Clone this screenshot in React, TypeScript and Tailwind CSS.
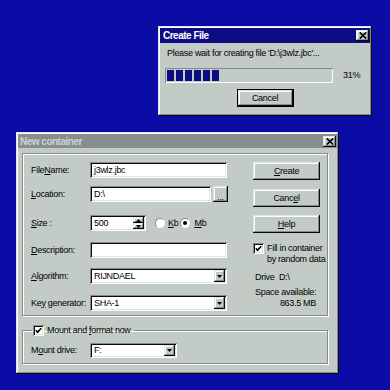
import type { ReactNode } from 'react';

const raised =
  'bg-[#c3cbc7] shadow-[inset_-1px_-1px_#0a0a0a,inset_1px_1px_#dde5e1,inset_-2px_-2px_#858d8a,inset_2px_2px_#ffffff]';
const sunken =
  'bg-white shadow-[inset_1px_1px_#858d8a,inset_-1px_-1px_#ffffff,inset_2px_2px_#0a0a0a,inset_-2px_-2px_#dde5e1]';
const etched = 'border border-[#858d8a] shadow-[inset_1px_1px_#ffffff,1px_1px_#ffffff]';

function CloseButton() {
  return (
    <div className={`flex h-[11px] w-[13px] items-center justify-center ${raised}`}>
      <svg width="8" height="7" viewBox="0 0 8 7" className="block">
        <path d="M0.8 0.5L7.2 6.5M7.2 0.5L0.8 6.5" stroke="#000" strokeWidth="1.7" />
      </svg>
    </div>
  );
}

function Field({ children, className = '' }: { children?: ReactNode; className?: string }) {
  return (
    <div className={`flex h-[16px] items-center pl-[4px] ${sunken} ${className}`}>{children}</div>
  );
}

function Combo({ value, className = '' }: { value: string; className?: string }) {
  return (
    <div className={`flex h-[16px] items-center p-[2px] ${sunken} ${className}`}>
      <span className="flex-1 pl-[2px]">{value}</span>
      <div className={`flex h-full w-[11px] items-center justify-center ${raised}`}>
        <svg width="5" height="3" viewBox="0 0 5 3" className="block">
          <path d="M0 0H5L2.5 3Z" fill="#000" />
        </svg>
      </div>
    </div>
  );
}

function Checkbox() {
  return (
    <div className={`flex h-[11px] w-[11px] shrink-0 items-center justify-center ${sunken}`}>
      <svg width="7" height="7" viewBox="0 0 7 7" className="block">
        <path d="M0.8 3.2L2.6 5.2L6.2 1.2" stroke="#000" strokeWidth="1.6" fill="none" />
      </svg>
    </div>
  );
}

function Radio({ checked }: { checked?: boolean }) {
  return (
    <div className="flex h-[10px] w-[10px] shrink-0 items-center justify-center rounded-full border border-b-white border-l-[#858d8a] border-r-white border-t-[#858d8a] bg-white">
      {checked && <div className="h-[4px] w-[4px] rounded-full bg-black" />}
    </div>
  );
}

function Button({ children, className = '' }: { children: ReactNode; className?: string }) {
  return (
    <div className={`flex h-[18px] w-[67px] items-center justify-center ${raised} ${className}`}>
      {children}
    </div>
  );
}

function CreateFileWindow() {
  return (
    <div className={`absolute left-[158px] top-[26px] flex h-[90px] w-[214px] flex-col p-[2px] ${raised}`}>
      <div className="flex h-[15px] items-center justify-between bg-[#0c0c84] pl-[3px] pr-[1px]">
        <span className="text-[10px] font-bold tracking-[-0.5px] text-white">Create File</span>
        <CloseButton />
      </div>
      <p className="ml-[7px] mt-[5px]">{"Please wait for creating file 'D:\\j3wlz.jbc'..."}</p>
      <div className="ml-[5px] mt-[9px] flex items-center">
        <div className="flex h-[15px] w-[168px] items-center gap-[2px] pl-[2px] shadow-[inset_1px_1px_#858d8a,inset_-1px_-1px_#ffffff]">
          {[0, 1, 2, 3, 4, 5].map((i) => (
            <div key={i} className="h-[11px] w-[7px] bg-[#0c0c84]" />
          ))}
        </div>
        <span className="ml-[10px]">31%</span>
      </div>
      <div className="mt-[6px] flex justify-center">
        <div className="border border-black">
          <div className={`flex h-[16px] w-[55px] items-center justify-center ${raised}`}>Cancel</div>
        </div>
      </div>
    </div>
  );
}

function NewContainerWindow() {
  return (
    <div className={`absolute left-[16px] top-[132px] flex h-[242px] w-[323px] flex-col p-[2px] ${raised}`}>
      <div className="flex h-[14px] items-center justify-between bg-[#868e8e] pl-[2px] pr-[1px]">
        <span className="text-[10px] font-bold tracking-[-0.5px] text-[#ccd4d0]">New container</span>
        <CloseButton />
      </div>

      {/* Main group */}
      <div className={`ml-[4px] mt-[5px] flex h-[163px] w-[306px] pl-[8px] ${etched}`}>
        <div className="flex w-[197px] flex-col pt-[8px]">
          <div className="flex h-[16px] items-center">
            <span className="w-[59px]">
              File<u>N</u>ame:
            </span>
            <Field className="w-[137px]">j3wlz.jbc</Field>
          </div>
          <div className="mt-[8px] flex h-[16px] items-center">
            <span className="w-[59px]">
              <u>L</u>ocation:
            </span>
            <Field className="w-[121px]">D:\</Field>
            <div className={`ml-[2px] flex h-[16px] w-[15px] items-end justify-center pb-[2px] leading-[6px] ${raised}`}>
              ...
            </div>
          </div>
          <div className="mt-[13px] flex h-[16px] items-center">
            <span className="w-[59px]">
              <u>S</u>ize :
            </span>
            <div className={`flex h-[16px] w-[56px] items-center p-[2px] ${sunken}`}>
              <span className="flex-1 pl-[2px]">500</span>
              <div className="flex h-full w-[11px] flex-col">
                <div className={`flex flex-1 items-center justify-center ${raised}`}>
                  <svg width="5" height="3" viewBox="0 0 5 3" className="block">
                    <path d="M0 3H5L2.5 0Z" fill="#000" />
                  </svg>
                </div>
                <div className={`flex flex-1 items-center justify-center ${raised}`}>
                  <svg width="5" height="3" viewBox="0 0 5 3" className="block">
                    <path d="M0 0H5L2.5 3Z" fill="#000" />
                  </svg>
                </div>
              </div>
            </div>
            <div className="ml-[9px] flex items-center">
              <Radio />
              <span className="ml-[3px]">
                <u>K</u>b
              </span>
            </div>
            <div className="ml-[2px] flex items-center">
              <Radio checked />
              <span className="ml-[4px]">
                <u>M</u>b
              </span>
            </div>
          </div>
          <div className="mt-[11px] flex h-[16px] items-center">
            <span className="w-[59px]">
              <u>D</u>escription:
            </span>
            <Field className="w-[137px]" />
          </div>
          <div className="mt-[10px] flex h-[16px] items-center">
            <span className="w-[59px]">
              <u>A</u>lgorithm:
            </span>
            <Combo value="RIJNDAEL" className="w-[137px]" />
          </div>
          <div className="mt-[11px] flex h-[16px] items-center">
            <span className="w-[59px]">
              Ke<u>y</u> generator:
            </span>
            <Combo value="SHA-1" className="w-[137px]" />
          </div>
        </div>

        <div className="ml-[25px] flex w-[67px] flex-col pt-[8px]">
          <Button>
            <span>
              <u>C</u>reate
            </span>
          </Button>
          <Button className="mt-[9px]">
            <span>
              Canc<u>e</u>l
            </span>
          </Button>
          <Button className="mt-[8px]">
            <span>
              <u>H</u>elp
            </span>
          </Button>
          <div className="mt-[10px] flex items-start">
            <Checkbox />
            <span className="ml-[3px] whitespace-nowrap">
              Fill in container
              <br />
              by random data
            </span>
          </div>
          <p className="ml-[2px] mt-[7px] whitespace-pre">{'Drive  D:\\'}</p>
          <p className="ml-[2px] mt-[4px] whitespace-nowrap">Space available:</p>
          <p className="pr-[4px] text-right">863.5 MB</p>
        </div>
      </div>

      {/* Mount group */}
      <fieldset className={`ml-[4px] mt-[9px] w-[306px] px-[8px] pb-[5px] ${etched}`}>
        <legend className="ml-[1px] px-[1px]">
          <span className="flex items-center">
            <Checkbox />
            <span className="ml-[3px] pr-[2px]">
              Mount and <u>f</u>ormat now
            </span>
          </span>
        </legend>
        <div className="mt-[7px] flex h-[15px] items-center">
          <span className="w-[59px]">
            M<u>o</u>unt drive:
          </span>
          <Combo value="F:" className="!h-[15px] w-[87px]" />
        </div>
      </fieldset>
    </div>
  );
}

export default function App() {
  return (
    <div className="relative h-[390px] w-[390px] overflow-hidden bg-[#0b0ba6] font-['Liberation_Sans',Arial,sans-serif] text-[9px] leading-[11px] tracking-[-0.3px] text-black">
      <CreateFileWindow />
      <NewContainerWindow />
    </div>
  );
}
